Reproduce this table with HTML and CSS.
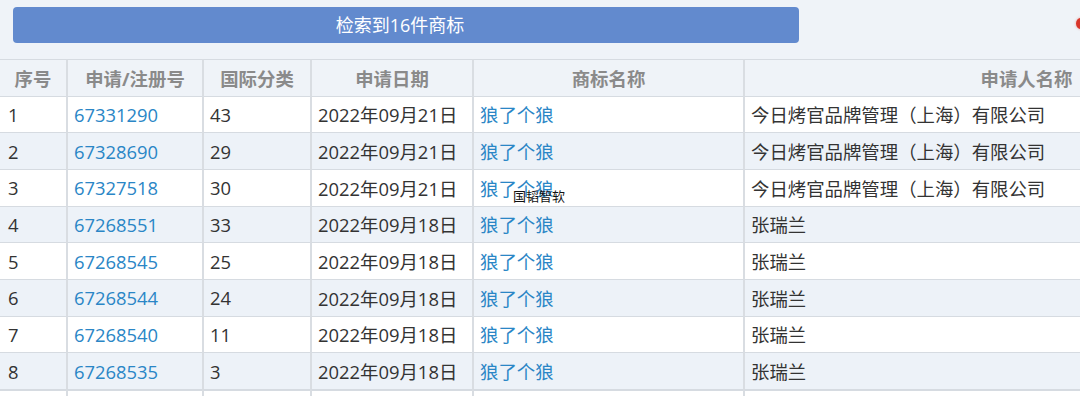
FILE: index.html
```html
<!DOCTYPE html>
<html lang="zh-CN">
<head>
<meta charset="utf-8">
<title>检索结果</title>
<link rel="stylesheet" href="styles.css">
</head>
<body>
<div class="page">
  <div class="toolbar">
    <div class="result-btn">检索到16件商标</div>
  </div>
  <span class="corner-dot"></span>
  <table class="grid">
    <colgroup>
      <col class="c-no"><col class="c-reg"><col class="c-cls"><col class="c-date"><col class="c-name"><col class="c-app">
    </colgroup>
    <thead>
      <tr><th>序号</th><th>申请/注册号</th><th>国际分类</th><th>申请日期</th><th>商标名称</th><th>申请人名称</th></tr>
    </thead>
    <tbody>
      <tr><td>1</td><td class="link">67331290</td><td>43</td><td>2022年09月21日</td><td class="link">狼了个狼</td><td>今日烤官品牌管理（上海）有限公司</td></tr>
      <tr><td>2</td><td class="link">67328690</td><td>29</td><td>2022年09月21日</td><td class="link">狼了个狼</td><td>今日烤官品牌管理（上海）有限公司</td></tr>
      <tr><td>3</td><td class="link">67327518</td><td>30</td><td>2022年09月21日</td><td class="link">狼了个狼</td><td>今日烤官品牌管理（上海）有限公司</td></tr>
      <tr><td>4</td><td class="link">67268551</td><td>33</td><td>2022年09月18日</td><td class="link">狼了个狼</td><td>张瑞兰</td></tr>
      <tr><td>5</td><td class="link">67268545</td><td>25</td><td>2022年09月18日</td><td class="link">狼了个狼</td><td>张瑞兰</td></tr>
      <tr><td>6</td><td class="link">67268544</td><td>24</td><td>2022年09月18日</td><td class="link">狼了个狼</td><td>张瑞兰</td></tr>
      <tr><td>7</td><td class="link">67268540</td><td>11</td><td>2022年09月18日</td><td class="link">狼了个狼</td><td>张瑞兰</td></tr>
      <tr><td>8</td><td class="link">67268535</td><td>3</td><td>2022年09月18日</td><td class="link">狼了个狼</td><td>张瑞兰</td></tr>
      <tr><td></td><td></td><td></td><td></td><td></td><td></td></tr>
    </tbody>
  </table>
  <span class="watermark">国韬智软</span>
</div>
</body>
</html>
```
FILE: styles.css
```css
html, body {
  margin: 0;
  padding: 0;
  background: #eff3f8;
  overflow: hidden;
}
body {
  font-family: "Open Sans", "Noto Sans CJK SC", sans-serif;
  color: #333;
}
.page {
  position: relative;
  width: 1080px;
  height: 396px;
  overflow: hidden;
}
.toolbar {
  padding: 7px 0 0 13px;
}
.result-btn {
  width: 786px;
  height: 36px;
  box-sizing: border-box;
  background: #628ace;
  border-radius: 4px;
  color: #fff;
  font-size: 18px;
  line-height: 36px;
  text-align: center;
  padding-right: 12px;
}
.corner-dot {
  position: absolute;
  left: 1076px;
  top: 18px;
  width: 10px;
  height: 11px;
  border-radius: 50% 0 0 50%;
  background: #d8352a;
  box-shadow: 0 0 2px 1px rgba(230, 120, 110, 0.3);
}
.grid {
  margin-top: 16px;
  width: 1308px;
  table-layout: fixed;
  border-collapse: separate;
  border-spacing: 0;
  font-size: 18.4px;
}
.c-no { width: 66px; }
.c-reg { width: 136px; }
.c-cls { width: 108px; }
.c-date { width: 162px; }
.c-name { width: 271px; }
.c-app { width: 565px; }
.grid th, .grid td {
  box-sizing: border-box;
  height: 36.67px;
  padding: 0 0 0 6px;
  border-top: 1px solid #d6dbe1;
  border-left: 2px solid #d9dde2;
  vertical-align: middle;
  white-space: nowrap;
  overflow: hidden;
}
.grid th:first-child, .grid td:first-child {
  border-left: 0;
  padding-left: 8px;
}
.grid th {
  background: #eff3f8;
  color: #8a8a8a;
  font-weight: 700;
  text-align: center;
  padding: 0;
}
.grid th:first-child { padding-left: 0; }
.grid tbody tr:nth-child(odd) td { background: #ffffff; }
.grid tbody tr:nth-child(even) td { background: #edf2f8; }
.grid td.link { color: #2a86c6; }
.grid tbody tr:last-child td { border-top-width: 2px; }
.watermark {
  position: absolute;
  left: 513px;
  top: 187px;
  font-family: "Noto Sans CJK SC", sans-serif;
  font-size: 13px;
  line-height: 18px;
  color: #111;
}
```
